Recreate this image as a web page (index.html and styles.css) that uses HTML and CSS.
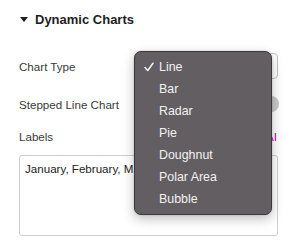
FILE: index.html
```html
<!DOCTYPE html>
<html>
<head>
<meta charset="utf-8">
<link rel="stylesheet" href="styles.css">
</head>
<body>
<div class="panel">
  <div class="heading"><span class="caret"></span><span>Dynamic Charts</span></div>
  <div class="row row-select">
    <span class="label">Chart Type</span>
    <div class="select"></div>
  </div>
  <div class="row row-toggle">
    <span class="label">Stepped Line Chart</span>
    <div class="toggle"><span class="knob"></span></div>
  </div>
  <div class="row row-labels">
    <span class="label">Labels</span>
    <span class="ai">AI</span>
  </div>
  <div class="textarea">January, February, M</div>
  <div class="menu">
    <div class="item checked"><svg class="check" width="10" height="10" viewBox="0 0 10 10"><polyline points="1,5.5 3.8,8.5 9,1.2" fill="none" stroke="#f2f2f2" stroke-width="1.5" stroke-linecap="round" stroke-linejoin="round"/></svg>Line</div>
    <div class="item">Bar</div>
    <div class="item">Radar</div>
    <div class="item">Pie</div>
    <div class="item">Doughnut</div>
    <div class="item">Polar Area</div>
    <div class="item">Bubble</div>
  </div>
</div>
</body>
</html>
```
FILE: styles.css
```css
html, body {
  margin: 0;
  padding: 0;
  background: #ffffff;
}
body {
  font-family: "Liberation Sans", Arial, sans-serif;
  width: 297px;
  height: 246px;
  overflow: hidden;
}
.panel {
  position: relative;
  padding: 9px 19px 0 19px;
  height: 246px;
  box-sizing: border-box;
}
.heading {
  display: flex;
  align-items: center;
  height: 20px;
  font-size: 13px;
  font-weight: bold;
  color: #1e1e1e;
}
.caret {
  width: 0;
  height: 0;
  border-left: 4px solid transparent;
  border-right: 4px solid transparent;
  border-top: 5px solid #1e1e1e;
  margin: 0 7px 0 1px;
}
.row {
  display: flex;
  align-items: center;
  justify-content: space-between;
}
.label {
  font-size: 11.6px;
  color: #3a3a3a;
}
.row-select {
  margin-top: 24px;
  height: 26px;
}
.select {
  width: 138px;
  height: 24px;
  border: 1px solid #c4c4c4;
  border-radius: 4px;
  background: #fff;
}
.row-toggle {
  margin-top: 13px;
  height: 24px;
}
.toggle {
  width: 30px;
  height: 16px;
  border-radius: 8px;
  background: #e3e3e3;
  margin-right: -1px;
  display: flex;
  justify-content: flex-end;
}
.knob {
  width: 16px;
  height: 16px;
  border-radius: 50%;
  background: #c9c9c9;
}
.row-labels {
  margin-top: 8px;
  height: 24px;
}
.ai {
  font-size: 11.6px;
  color: #c400c4;
  margin-right: 1px;
}
.textarea {
  margin-top: 7px;
  height: 81px;
  box-sizing: border-box;
  border: 1px solid #cfcfcf;
  border-radius: 3px;
  padding: 6px 5px;
  font-size: 11.6px;
  color: #222;
  white-space: nowrap;
  overflow: hidden;
}
.menu {
  position: absolute;
  left: 134px;
  top: 51px;
  width: 138px;
  box-sizing: border-box;
  padding: 4px 0 4px 0;
  background: #625e62;
  border: 1px solid #3c393c;
  border-radius: 7px;
  box-shadow: 0 4px 12px rgba(0,0,0,0.25), 0 0 2px rgba(0,0,0,0.2);
}
.item {
  position: relative;
  height: 22px;
  line-height: 22px;
  padding-left: 24px;
  font-size: 12.4px;
  color: #f2f2f2;
}
.check {
  position: absolute;
  left: 9px;
  top: 6px;
}
```
